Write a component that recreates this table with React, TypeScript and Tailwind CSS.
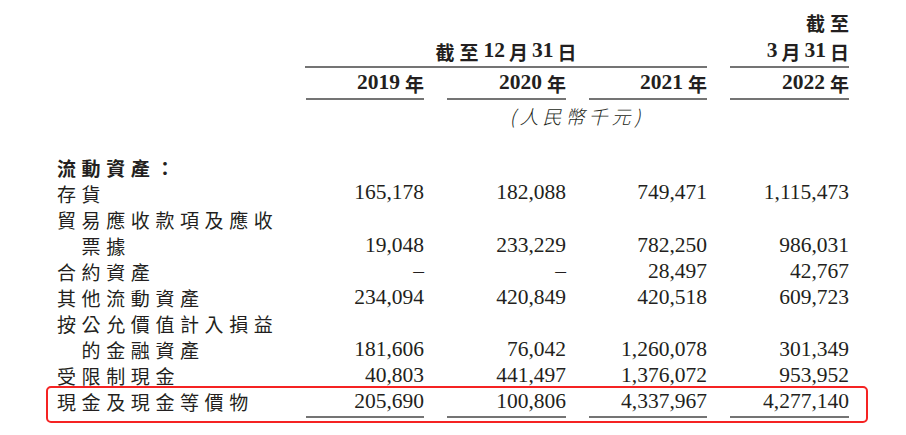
import React from 'react';

type Row = {
  label: string;
  values?: string[];
  bold?: boolean;
  indent?: boolean;
};

const rows: Row[] = [
  { label: '流動資產：', bold: true },
  { label: '存貨', values: ['165,178', '182,088', '749,471', '1,115,473'] },
  { label: '貿易應收款項及應收' },
  { label: '票據', indent: true, values: ['19,048', '233,229', '782,250', '986,031'] },
  { label: '合約資產', values: ['–', '–', '28,497', '42,767'] },
  { label: '其他流動資產', values: ['234,094', '420,849', '420,518', '609,723'] },
  { label: '按公允價值計入損益' },
  { label: '的金融資產', indent: true, values: ['181,606', '76,042', '1,260,078', '301,349'] },
  { label: '受限制現金', values: ['40,803', '441,497', '1,376,072', '953,952'] },
];

const total: Row = { label: '現金及現金等價物', values: ['205,690', '100,806', '4,337,967', '4,277,140'] };

const grid = 'grid grid-cols-[226px_141px_142px_141px_142px] pl-[57px]';
const cjk = "font-['Noto_Sans_CJK_TC',sans-serif]";
const serif = "font-['Liberation_Serif','Noto_Sans_CJK_TC',serif]";

function DataRow({ row }: { row: Row }) {
  return (
    <div className={`${grid} h-[26.1px] items-center`}>
      <div
        className={`${cjk} text-[19px] leading-none tracking-[5.6px] whitespace-nowrap ${
          row.bold ? 'font-bold' : 'font-normal'
        } ${row.indent ? 'pl-[24.6px]' : ''}`}
      >
        {row.label}
      </div>
      {(row.values ?? ['', '', '', '']).map((v, i) => (
        <div key={i} className={`${serif} text-right text-[21.5px] leading-none`}>
          {v}
        </div>
      ))}
    </div>
  );
}

function YearCell({ year }: { year: string }) {
  return (
    <div className="ml-[23px] flex h-[32px] items-center justify-end border-b-2 border-[#747474]">
      <span className={`${serif} text-[21.5px] font-bold leading-none`}>{year}</span>
      <span className={`${cjk} ml-[5px] text-[19px] font-bold leading-none`}>年</span>
    </div>
  );
}

export default function App() {
  return (
    <div className="h-[435px] w-[906px] overflow-hidden bg-white pt-[8px] text-[#231f20]">
      {/* header */}
      <div className={grid}>
        <div className="col-start-5 flex h-[28px] items-center justify-end">
          <span className={`${cjk} text-[19px] font-bold leading-none tracking-[5px] mr-[-5px]`}>截至</span>
        </div>

        <div className="col-span-3 col-start-2 ml-[22px] flex h-[32px] items-center justify-center border-b-2 border-[#747474]">
          <span className={`${cjk} text-[19px] font-bold leading-none tracking-[5px]`}>截至</span>
          <span className={`${serif} text-[21.5px] font-bold leading-none`}>12</span>
          <span className={`${cjk} mx-[4px] text-[19px] font-bold leading-none`}>月</span>
          <span className={`${serif} text-[21.5px] font-bold leading-none`}>31</span>
          <span className={`${cjk} ml-[4px] text-[19px] font-bold leading-none`}>日</span>
        </div>
        <div className="ml-[23px] flex h-[32px] items-center justify-end border-b-2 border-[#747474]">
          <span className={`${serif} text-[21.5px] font-bold leading-none`}>3</span>
          <span className={`${cjk} mx-[4px] text-[19px] font-bold leading-none`}>月</span>
          <span className={`${serif} text-[21.5px] font-bold leading-none`}>31</span>
          <span className={`${cjk} ml-[4px] text-[19px] font-bold leading-none`}>日</span>
        </div>

        <div className="col-start-2">
          <YearCell year="2019" />
        </div>
        <YearCell year="2020" />
        <YearCell year="2021" />
        <YearCell year="2022" />

        <div className="col-span-4 col-start-2 ml-[22px] flex h-[30px] items-center justify-center">
          <span className={`${cjk} text-[19px] font-light italic leading-none tracking-[4px]`}>(人民幣千元)</span>
        </div>
      </div>

      {/* body */}
      <div className="mt-[24px]">
        {rows.map((r) => (
          <DataRow key={r.label} row={r} />
        ))}
        <div className="relative">
          <DataRow row={total} />
          <div className={`${grid} mt-[1px]`}>
            <div />
            {[0, 1, 2, 3].map((i) => (
              <div key={i} className="ml-[23px] h-[2px] bg-[#747474]" />
            ))}
          </div>
          <div className="pointer-events-none absolute left-[46px] top-[-3px] h-[37px] w-[822px] rounded-[5px] border-2 border-[#f52323]" />
        </div>
      </div>
    </div>
  );
}
